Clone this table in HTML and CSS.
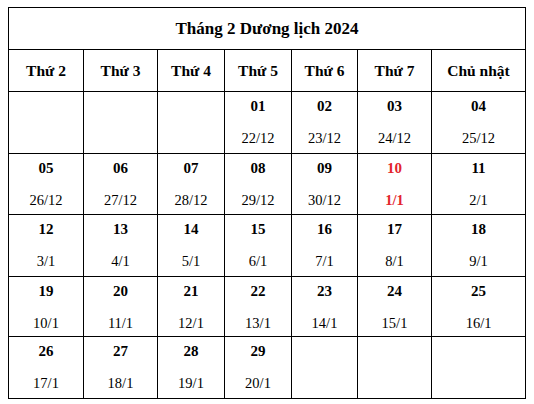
FILE: index.html
```html
<!DOCTYPE html>
<html lang="vi">
<head>
    <meta charset="UTF-8">
    <meta name="viewport" content="width=device-width, initial-scale=1.0">
    <title>Tháng 2 Dương lịch 2024</title>
    <link rel="stylesheet" href="styles.css">
</head>
<body>
    <table class="calendar">
        <colgroup>
            <col class="c1">
            <col class="c2">
            <col class="c3">
            <col class="c4">
            <col class="c5">
            <col class="c6">
            <col class="c7">
        </colgroup>
        <tr class="title-row">
            <th colspan="7">Tháng 2 Dương lịch 2024</th>
        </tr>
        <tr class="head-row">
            <th>Thứ 2</th>
            <th>Thứ 3</th>
            <th>Thứ 4</th>
            <th>Thứ 5</th>
            <th>Thứ 6</th>
            <th>Thứ 7</th>
            <th>Chủ nhật</th>
        </tr>
        <tr class="week r1">
            <td></td>
            <td></td>
            <td></td>
            <td><div class="day">01</div><div class="lunar">22/12</div></td>
            <td><div class="day">02</div><div class="lunar">23/12</div></td>
            <td><div class="day">03</div><div class="lunar">24/12</div></td>
            <td><div class="day">04</div><div class="lunar">25/12</div></td>
        </tr>
        <tr class="week r2">
            <td><div class="day">05</div><div class="lunar">26/12</div></td>
            <td><div class="day">06</div><div class="lunar">27/12</div></td>
            <td><div class="day">07</div><div class="lunar">28/12</div></td>
            <td><div class="day">08</div><div class="lunar">29/12</div></td>
            <td><div class="day">09</div><div class="lunar">30/12</div></td>
            <td class="tet"><div class="day">10</div><div class="lunar">1/1</div></td>
            <td><div class="day">11</div><div class="lunar">2/1</div></td>
        </tr>
        <tr class="week r3">
            <td><div class="day">12</div><div class="lunar">3/1</div></td>
            <td><div class="day">13</div><div class="lunar">4/1</div></td>
            <td><div class="day">14</div><div class="lunar">5/1</div></td>
            <td><div class="day">15</div><div class="lunar">6/1</div></td>
            <td><div class="day">16</div><div class="lunar">7/1</div></td>
            <td><div class="day">17</div><div class="lunar">8/1</div></td>
            <td><div class="day">18</div><div class="lunar">9/1</div></td>
        </tr>
        <tr class="week r4">
            <td><div class="day">19</div><div class="lunar">10/1</div></td>
            <td><div class="day">20</div><div class="lunar">11/1</div></td>
            <td><div class="day">21</div><div class="lunar">12/1</div></td>
            <td><div class="day">22</div><div class="lunar">13/1</div></td>
            <td><div class="day">23</div><div class="lunar">14/1</div></td>
            <td><div class="day">24</div><div class="lunar">15/1</div></td>
            <td><div class="day">25</div><div class="lunar">16/1</div></td>
        </tr>
        <tr class="week r5">
            <td><div class="day">26</div><div class="lunar">17/1</div></td>
            <td><div class="day">27</div><div class="lunar">18/1</div></td>
            <td><div class="day">28</div><div class="lunar">19/1</div></td>
            <td><div class="day">29</div><div class="lunar">20/1</div></td>
            <td></td>
            <td></td>
            <td></td>
        </tr>
    </table>
</body>
</html>
```

FILE: styles.css
```css
body {
    margin: 0;
    padding: 7px 8px;
    background: #fff;
    font-family: "Liberation Serif", "Times New Roman", serif;
    color: #000;
}
.calendar {
    border-collapse: collapse;
    table-layout: fixed;
    width: 517px;
}
.c1 { width: 75px; }
.c2 { width: 74px; }
.c3 { width: 67px; }
.c4 { width: 67px; }
.c5 { width: 66px; }
.c6 { width: 74px; }
.c7 { width: 94px; }
th, td {
    border: 1px solid #000;
    padding: 0;
    text-align: center;
}
.title-row th {
    height: 41px;
    font-size: 17px;
    font-weight: bold;
}
.head-row th {
    height: 41px;
    font-size: 15.5px;
    font-weight: bold;
}
.week td {
    vertical-align: top;
    font-size: 15px;
}
.r1 td { height: 61px; }
.r2 td { height: 60px; }
.r3 td { height: 61px; }
.r4 td { height: 59px; }
.r5 td { height: 61px; }
.day {
    font-weight: bold;
    padding-top: 6px;
    line-height: 17px;
}
.lunar {
    margin-top: 15px;
    line-height: 17px;
    font-size: 14.5px;
}
.tet .day,
.tet .lunar {
    color: #e3242b;
    font-weight: bold;
}
```
